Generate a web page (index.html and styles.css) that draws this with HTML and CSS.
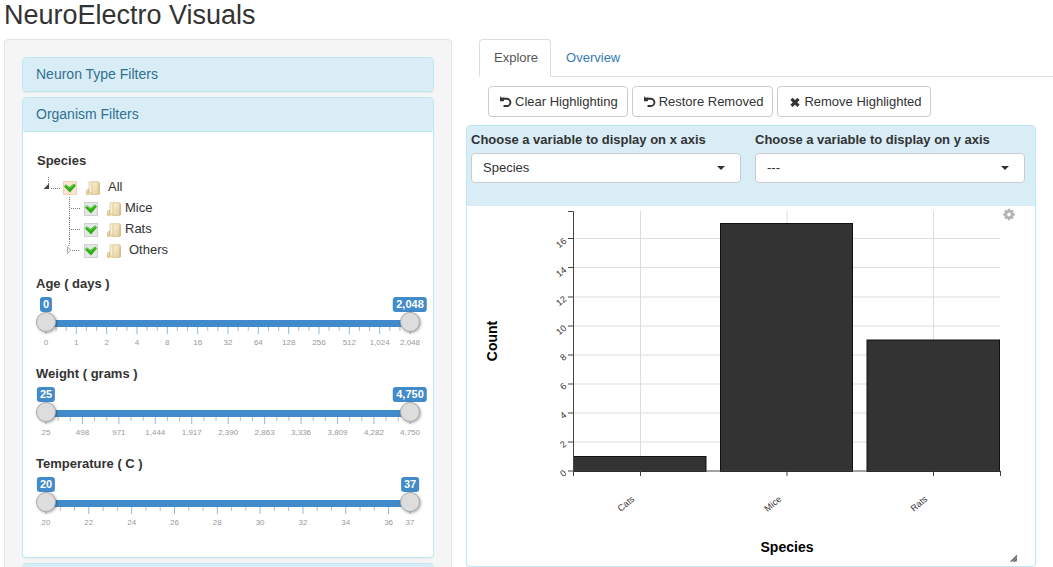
FILE: index.html
```html
<!DOCTYPE html>
<html lang="en">
<head>
<meta charset="utf-8">
<meta name="viewport" content="width=device-width, initial-scale=1">
<title>NeuroElectro Visuals</title>
<link rel="stylesheet" href="styles.css">
</head>
<body>
<svg class="sprite" width="0" height="0" aria-hidden="true">
  <defs>
    <linearGradient id="paper" x1="0" y1="0" x2="1" y2="1">
      <stop offset="0" stop-color="#fcf4d6"/><stop offset="1" stop-color="#e2c995"/>
    </linearGradient>
    <symbol id="folder" viewBox="0 0 14 14">
      <path d="M3 .8h5v11H3z" fill="#f8efd2" stroke="#dccba2" stroke-width=".8"/>
      <path d="M.5 13.300V9.500L2.500 8v5.300z" fill="#eedcab" stroke="#cfb680" stroke-width=".8"/>
      <path d="M1 12h5v1.500H1z" fill="#e5cd93"/>
      <path d="M6 2 7.500 .8h5.500v11.700l-1 1H6z" fill="url(#paper)" stroke="#d6c090" stroke-width=".8"/>
      <path d="M13.300 2v11l-1 .7" fill="none" stroke="#bfa267" stroke-width=".7"/>
    </symbol>
    <symbol id="undo" viewBox="0 0 12 12">
      <path d="M2.500 2.800H6.800a3.600 3.600 0 0 1 0 7.200H3.500" fill="none" stroke="#333" stroke-width="1.900"/>
      <path d="M0 .3 1.700 1.700 4.300 1.500 3.800 5.200H0z" fill="#333"/>
    </symbol>
    <symbol id="remove" viewBox="0 0 12 12">
      <path d="M2.500 2.800l7 7M9.500 2.800l-7 7" stroke="#333" stroke-width="3.200"/>
    </symbol>
  </defs>
</svg>

<h1 class="title">NeuroElectro Visuals</h1>
<div class="layout">
  <aside class="sidebar">
    <section class="panel"><h2 class="panel-heading"><a href="#neuron">Neuron Type Filters</a></h2></section>
    <section class="panel">
      <h2 class="panel-heading"><a href="#organism">Organism Filters</a></h2>
      <div class="panel-body" id="organism">
        <div class="field-label">Species</div>
        <ul class="tree">
          <li class="node">
            <svg class="branch" width="20" height="21"><path d="M7.500 1v11M10 12.500h9" class="dots"/><path d="M8 7.500V13H2.500z" fill="#444"/></svg>
            <input class="check check-hot" type="checkbox" id="sp-all" checked>
            <svg class="folder" width="14" height="14"><use href="#folder"/></svg>
            <label class="root-name" for="sp-all">All</label>
          </li>
          <li class="node child">
            <svg class="branch" width="20" height="21"><path d="M7.500 0v21M9 11.500h9" class="dots"/></svg>
            <input class="check" type="checkbox" id="sp-mice" checked>
            <svg class="folder" width="14" height="14"><use href="#folder"/></svg>
            <label for="sp-mice">Mice</label>
          </li>
          <li class="node child">
            <svg class="branch" width="20" height="21"><path d="M7.500 0v21M9 11.500h9" class="dots"/></svg>
            <input class="check" type="checkbox" id="sp-rats" checked>
            <svg class="folder" width="14" height="14"><use href="#folder"/></svg>
            <label for="sp-rats">Rats</label>
          </li>
          <li class="node child">
            <svg class="branch" width="20" height="21"><path d="M7.500 0v4L6.500 8M10 11.500h8" class="dots"/><path d="M5.500 8v6.500L9 11.200z" fill="#fff" stroke="#aaa"/></svg>
            <input class="check" type="checkbox" id="sp-others" checked>
            <svg class="folder" width="14" height="14"><use href="#folder"/></svg>
            <label class="group-name" for="sp-others">Others</label>
          </li>
        </ul>

        <div class="range">
          <div class="range-label">Age ( days )</div>
          <div class="slider" data-labels="0;1;2;4;8;16;32;64;128;256;512;1,024;2,048" data-step="8.3333">
            <output class="bubble bubble-from">0</output><output class="bubble bubble-to">2,048</output>
            <div class="track"></div>
            <input class="thumb" type="range" min="0" max="12" value="0" aria-label="Minimum age in days">
            <input class="thumb" type="range" min="0" max="12" value="12" aria-label="Maximum age in days">
            <svg class="scale" aria-hidden="true"></svg>
          </div>
        </div>
        <div class="range">
          <div class="range-label">Weight ( grams )</div>
          <div class="slider" data-labels="25;498;971;1,444;1,917;2,390;2,863;3,336;3,809;4,282;4,750" data-step="10.0106">
            <output class="bubble bubble-from">25</output><output class="bubble bubble-to">4,750</output>
            <div class="track"></div>
            <input class="thumb" type="range" min="25" max="4750" value="25" aria-label="Minimum weight in grams">
            <input class="thumb" type="range" min="25" max="4750" value="4750" aria-label="Maximum weight in grams">
            <svg class="scale" aria-hidden="true"></svg>
          </div>
        </div>
        <div class="range">
          <div class="range-label">Temperature ( C )</div>
          <div class="slider" data-labels="20;22;24;26;28;30;32;34;36;37" data-step="11.7647">
            <output class="bubble bubble-from">20</output><output class="bubble bubble-to">37</output>
            <div class="track"></div>
            <input class="thumb" type="range" min="20" max="37" value="20" aria-label="Minimum temperature">
            <input class="thumb" type="range" min="20" max="37" value="37" aria-label="Maximum temperature">
            <svg class="scale" aria-hidden="true"></svg>
          </div>
        </div>
      </div>
    </section>
    <section class="panel"><div class="panel-heading panel-next"></div></section>
  </aside>

  <main class="main">
    <nav class="tabs">
      <a class="tab tab-active" href="#explore">Explore</a>
      <a class="tab" href="#overview">Overview</a>
    </nav>
    <div class="toolbar">
      <button class="btn" type="button"><svg width="12" height="12"><use href="#undo"/></svg>Clear Highlighting</button>
      <button class="btn" type="button"><svg width="12" height="12"><use href="#undo"/></svg>Restore Removed</button>
      <button class="btn" type="button"><svg width="12" height="12"><use href="#remove"/></svg>Remove Highlighted</button>
    </div>
    <section class="panel plot-panel">
      <div class="axes">
        <div class="axis-field">
          <label for="xvar">Choose a variable to display on x axis</label>
          <select class="select" id="xvar"><option>Species</option></select>
        </div>
        <div class="axis-field">
          <label for="yvar">Choose a variable to display on y axis</label>
          <select class="select" id="yvar"><option>---</option></select>
        </div>
      </div>
      <svg class="chart" viewBox="0 0 568 360" role="img" aria-label="Count by species">
        <g class="grid">
          <path d="M173.500 5v260M320 5v260M466.500 5v260"/>
          <path d="M106 236h427M106 207h427M106 178h427M106 149h427M106 120h427M106 91h427M106 61.500h427M106 32.500h427"/>
        </g>
        <g class="bars">
          <rect x="106.500" y="250.500" width="132.500" height="15"/>
          <rect x="253.500" y="17.500" width="132" height="248"/>
          <rect x="400" y="134" width="132.500" height="131.500"/>
        </g>
        <g class="axis">
          <path d="M101 5.500h5.500V265.500M101 265h432.500"/>
          <path d="M101 236h5M101 207h5M101 178h5M101 149h5M101 120h5M101 91h5M101 61.500h5M101 32.500h5"/>
          <path d="M106.500 265v5M173.500 265v5M320 265v5M466.500 265v5M533.500 265v5"/>
        </g>
        <g class="ticks">
          <text transform="translate(100 268) rotate(-40)">0</text>
          <text transform="translate(100 239) rotate(-40)">2</text>
          <text transform="translate(100 210) rotate(-40)">4</text>
          <text transform="translate(100 181) rotate(-40)">6</text>
          <text transform="translate(100 152) rotate(-40)">8</text>
          <text transform="translate(100 123) rotate(-40)">10</text>
          <text transform="translate(100 94) rotate(-40)">12</text>
          <text transform="translate(100 65) rotate(-40)">14</text>
          <text transform="translate(100 36) rotate(-40)">16</text>
          <text transform="translate(168 294) rotate(-40)">Cats</text>
          <text transform="translate(315 294) rotate(-40)">Mice</text>
          <text transform="translate(461 294) rotate(-40)">Rats</text>
        </g>
        <text class="axis-title" transform="translate(30 135) rotate(-90)">Count</text>
        <text class="axis-title" x="320" y="346">Species</text>
        <g transform="translate(542 8.500)">
          <circle r="3.200" fill="none" stroke="#b3b3b3" stroke-width="2.600"/>
          <path d="M0-5.700v2M0 3.700v2M-5.700 0h2M3.700 0h2M-4-4l1.400 1.400M2.600 2.600 4 4M-4 4l1.400-1.400M2.600-2.600 4-4" stroke="#b3b3b3" stroke-width="2.300"/>
        </g>
        <path d="M543 355.500l7-7v7z" fill="#888"/><path d="M543.500 356l6.500-6.500M547 356l3-3" stroke="#555" stroke-width=".8"/>
      </svg>
    </section>
  </main>
</div>
<script src="scale.js"></script>
</body>
</html>
```

FILE: styles.css
```css
html {
  height: 100%;
}

body {
  height: 100%;
  margin: 0;
  overflow: auto;
  scrollbar-width: none;
  background: #fff;
  color: #333;
  font: 13px/18px "Liberation Sans", Arial, sans-serif;
}

* {
  box-sizing: border-box;
}

a {
  color: inherit;
  text-decoration: none;
}

.sprite {
  position: absolute;
}

.title {
  margin: 0;
  padding-left: 4px;
  font-size: 27px;
  font-weight: 400;
  line-height: 30px;
}

.layout {
  display: grid;
  grid-template-columns: minmax(0, 448fr) minmax(0, 587fr);
  gap: 14px;
  align-items: start;
  padding: 9px 0 0 4px;
}

.sidebar {
  display: grid;
  gap: 5px;
  padding: 17px;
  border: 1px solid #e3e3e3;
  border-radius: 4px;
  background: #f5f5f5;
}

.panel {
  border: 1px solid #bce8f1;
  border-radius: 4px;
  background: #fff;
  box-shadow: 0 1px 1px rgba(0, 0, 0, 0.05);
}

.panel-heading {
  margin: 0;
  padding: 9px 13px;
  border-radius: 3px;
  background: #d9edf7;
  color: #31708f;
  font-size: 14px;
  font-weight: 400;
  line-height: 15px;
}

.panel-next {
  height: 33px;
}

.panel-body {
  padding: 20px 13px 12px;
  border-top: 1px solid #bce8f1;
}

.field-label {
  padding-left: 1px;
  font-weight: 700;
}

.tree {
  margin: 6px 0 15px;
  padding: 0 0 0 5px;
  list-style: none;
}

.node {
  display: flex;
  align-items: center;
  height: 21px;
}

.child {
  padding-left: 21px;
}

.branch {
  flex: none;
}

.dots {
  fill: none;
  stroke: #777;
  stroke-dasharray: 1 1;
}

.check {
  appearance: none;
  flex: none;
  width: 14px;
  height: 14px;
  margin: 3px 9px 0 2px;
  border: 1px solid #d0d0d0;
  background: #e6e6e6;
}

.check:checked {
  background-image: url("data:image/svg+xml,%3Csvg xmlns='http://www.w3.org/2000/svg' viewBox='0 0 12 12'%3E%3Cpath d='M0 4.500 1.800 2.200 5.500 5 10 1.500l2 2L6 10.500z' fill='%232fae18'/%3E%3Cpath d='M.8 4.500l1.200-1.300L5.500 6 10 2.600l1 1' fill='none' stroke='%236bd44f'/%3E%3C/svg%3E");
}

.check-hot {
  border-color: #fbd0ae;
  background-color: #fbe4d3;
}

.folder {
  flex: none;
  margin: 3px 4px 0 0;
}

.child .folder {
  margin-left: 0;
}

.root-name {
  padding-left: 4px;
}

.group-name {
  padding-left: 4px;
}

.range {
  padding-bottom: 18px;
}

.range-label {
  margin-bottom: 4px;
  font-weight: 700;
}

.slider {
  position: relative;
  height: 50px;
  padding: 23px 10px 0;
}

.track {
  height: 7px;
  background: #428bca;
}

.bubble {
  position: absolute;
  top: 0;
  padding: 0 3px;
  border-radius: 3px;
  background: #428bca;
  color: #fff;
  font-size: 11px;
  font-weight: 700;
  line-height: 15px;
}

.bubble-from {
  left: 10px;
  transform: translateX(-50%);
}

.bubble-to {
  right: 10px;
  transform: translateX(50%);
}

.thumb {
  appearance: none;
  position: absolute;
  top: 15px;
  left: 0;
  width: 100%;
  height: 20px;
  margin: 0;
  background: none;
  pointer-events: none;
}

.thumb::-webkit-slider-thumb {
  appearance: none;
  width: 20px;
  height: 20px;
  border: 1px solid #aaa;
  border-radius: 50%;
  background: #ddd;
  box-shadow: 1px 1px 3px rgba(0, 0, 0, 0.35);
  pointer-events: auto;
}

.scale {
  display: block;
  width: 100%;
  height: 20px;
  overflow: visible;
}

.scale-major {
  stroke: #8dbae0;
}

.scale-minor {
  stroke: #bbb;
}

.scale text {
  fill: #999;
  font-size: 8px;
  text-anchor: middle;
}

.tabs {
  display: flex;
  margin-left: 13px;
  border-bottom: 1px solid #ddd;
}

.tab {
  margin-bottom: -1px;
  padding: 9px 12px 9px 14px;
  border: 1px solid transparent;
  border-radius: 4px 4px 0 0;
  color: #337ab7;
}

.tab-active {
  border-color: #ddd #ddd #fff;
  background: #fff;
  color: #555;
}

.toolbar {
  display: flex;
  gap: 4px;
  padding: 9px 22px 8px;
}

.btn {
  display: flex;
  align-items: center;
  gap: 3px;
  padding: 6px 9px 5px 11px;
  border: 1px solid #ccc;
  border-radius: 4px;
  background: #fff;
  color: #333;
  font: inherit;
  white-space: nowrap;
}

.plot-panel {
  margin-right: 17px;
}

.axes {
  display: grid;
  grid-template-columns: 1fr 1fr;
  gap: 14px;
  padding: 5px 10px 23px 4px;
  border-radius: 3px 3px 0 0;
  background: #d9edf7;
}

.axis-field {
  display: grid;
  gap: 4px;
  font-weight: 700;
}

.select {
  appearance: none;
  width: 100%;
  height: 30px;
  padding: 0 30px 0 11px;
  border: 1px solid #ccc;
  border-radius: 4px;
  background: #fff url("data:image/svg+xml,%3Csvg xmlns='http://www.w3.org/2000/svg' width='8' height='4'%3E%3Cpath d='M0 0h8L4 4z' fill='%23333'/%3E%3C/svg%3E") no-repeat right 15px center;
  color: #333;
  font: inherit;
  font-weight: 400;
}

.chart {
  display: block;
  width: 100%;
  font-family: "Liberation Sans", Arial, sans-serif;
}

.grid path {
  stroke: #ddd;
}

.bars rect {
  fill: #333;
  stroke: #111;
}

.axis path {
  fill: none;
  stroke: #444;
}

.ticks text {
  fill: #333;
  font-size: 9px;
  text-anchor: end;
}

.axis-title {
  fill: #000;
  font-size: 14px;
  font-weight: 700;
  text-anchor: middle;
}
```

FILE: scale.js
```js
const SVG_NS = "http://www.w3.org/2000/svg";

function add(svg, name, attrs, text) {
  const el = document.createElementNS(SVG_NS, name);
  for (const key in attrs) el.setAttribute(key, attrs[key]);
  if (text) el.textContent = text;
  svg.appendChild(el);
}

function tick(svg, percent, length, cls) {
  add(svg, "line", { x1: percent + "%", x2: percent + "%", y1: 0, y2: length, class: cls });
}

document.querySelectorAll(".slider").forEach((slider) => {
  const svg = slider.querySelector(".scale");
  const labels = slider.dataset.labels.split(";");
  const step = Number(slider.dataset.step);
  const last = labels.length - 1;
  labels.forEach((label, i) => {
    const at = i === last ? 100 : i * step;
    tick(svg, at, 7, "scale-major");
    add(svg, "text", { x: at + "%", y: 18 }, label);
    if (i < last && at + step < 101) {
      tick(svg, at + step / 3, 4, "scale-minor");
      tick(svg, at + (step * 2) / 3, 4, "scale-minor");
    }
  });
});
```
